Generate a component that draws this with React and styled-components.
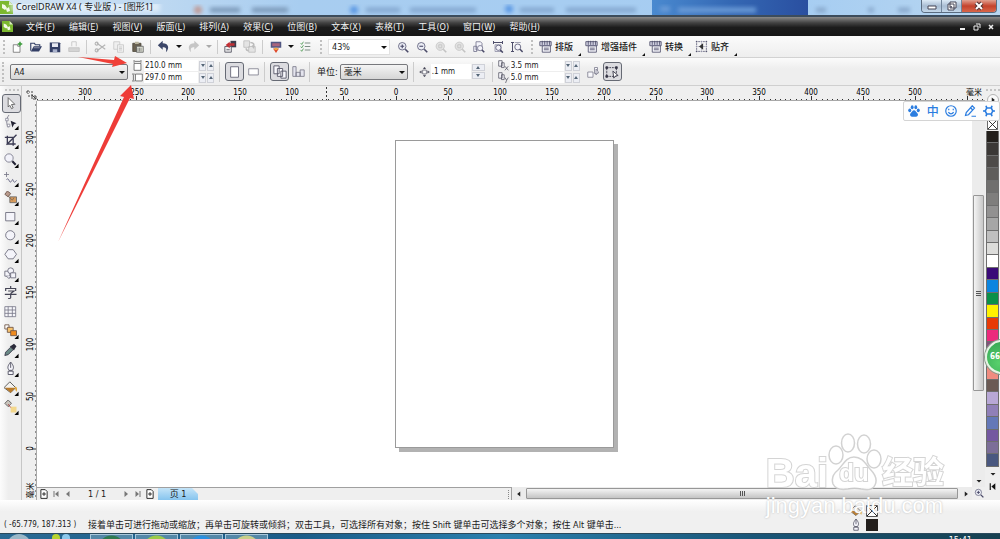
import React from "react";
import styled, { createGlobalStyle } from "styled-components";

const GlobalStyle = createGlobalStyle`
  * {
    box-sizing: border-box;
  }
  body {
    margin: 0;
    background: #efefef;
  }
  button, input, select {
    font: inherit;
    color: inherit;
    margin: 0;
    padding: 0;
    border: 0;
    background: none;
    border-radius: 0;
  }
`;

const menus = [
  ["文件", "F"],
  ["编辑", "E"],
  ["视图", "V"],
  ["版面", "L"],
  ["排列", "A"],
  ["效果", "C"],
  ["位图", "B"],
  ["文本", "X"],
  ["表格", "T"],
  ["工具", "O"],
  ["窗口", "W"],
  ["帮助", "H"]
];

const swatches = [
  "#231f1c", "#3b3836", "#4e4b49", "#5f5d5b", "#706f6e", "#7f7e7d", "#929191",
  "#a6a6a6", "#bfbfbf", "#dcdcda", "#ffffff", "#3a0a78", "#0a85e0", "#0a9048",
  "#fff200", "#e83a06", "#ec2a7c", "#82507c", "#b06a8a", "#f08c80", "#6b5a54",
  "#b8a8d6", "#9080b8", "#6478b8", "#7458a0", "#7c6e98", "#4a5880"
];

const ink = "#4a4a68";

/* 16x16 drawings used by the bars */
const icons = {
  newDoc: (
    <>
      <path d="M3 5h6v2h3v8H3z" fill="#fff" stroke="#666" />
      <path d="M12 1v6M9 4h6" stroke="#3a9a3a" strokeWidth="2" />
    </>
  ),
  open: (
    <>
      <path d="M1 13V3h5l1 2h6v2" fill="none" stroke="#333f66" strokeWidth="1.5" />
      <path d="M1 14 5 7h11l-4 7z" fill="#333f66" />
      <path d="M5 9h8" stroke="#aab" />
    </>
  ),
  save: (
    <>
      <path d="M1 2h13l1 1v12H1z" fill="#333f66" />
      <path d="M4 3h8v5H4z" fill="#e6e8f2" />
      <path d="M5 11h6v4H5z" fill="#aab2cc" />
    </>
  ),
  print: (
    <g fill="none" stroke="#bdbdbd">
      <path d="M5 7V1h6v6M4 10h8" />
      <path d="M1 9h14v5H1z" fill="#d4d4d4" />
    </g>
  ),
  cut: (
    <g fill="none" stroke="#b2b2b2" strokeWidth="1.4">
      <path d="m4 3 11 8M4 13l11-8" />
      <circle cx="3.500" cy="3.500" r="2" />
      <circle cx="3.500" cy="12.500" r="2" />
    </g>
  ),
  copy: (
    <g fill="#efefef" stroke="#c4c4c4">
      <path d="M1 1h8v10H1z" />
      <path d="M6 5h8v10H6zM8 8h4M8 10h4M8 12h4" />
    </g>
  ),
  paste: (
    <>
      <path d="M1 3h11v11H1z" fill="#6a6252" stroke="#4a4438" />
      <path d="M4 1h5v3H4z" fill="#bbb6a0" />
      <path d="M6 7h9v8H6z" fill="#dfe2d6" stroke="#555" />
      <path d="M8 9v5M10 9v5M12 9v5" stroke="#777" />
    </>
  ),
  undo: (
    <path d="M7 1v3c7 0 9 6 4 11 1-5 0-6-4-6v3L1 6.500z" fill="#3b4668" />
  ),
  redo: (
    <path d="M9 1v3C2 4 0 10 5 15 4 10 5 9 9 9v3l6-5.500z" fill="#c6c6c6" />
  ),
  importDoc: (
    <>
      <path d="M8 1h7v8H8z" fill="#3d3d4c" />
      <path d="M1 8h8v7H1z" fill="#eee" stroke="#4a4a58" />
      <path d="M13 4v3H7v3L2 6l5-4v2z" fill="#c22f35" />
      <path d="M3 12h4" stroke="#445" />
    </>
  ),
  exportDoc: (
    <g fill="#e4e4e4" stroke="#bcbcbc">
      <path d="M1 1h7v8H1zM7 8h8v7H7z" />
      <path d="M9 3c4 0 5 2 4 6l-2-2M4 10c0 3 1 3 3 3" fill="none" strokeWidth="2" />
    </g>
  ),
  launcher: (
    <>
      <path d="M1 1h14v8H1z" fill="#515782" />
      <path d="M3 3h10v4H3z" fill="#a9647c" />
      <path d="M4 10h8l-4 6z" fill="#df4b2c" />
      <path d="M6 9h4v3H6z" fill="#edaa42" />
    </>
  ),
  checks: (
    <>
      <path d="M7 3h8M7 8h8M7 13h8" stroke="#7f8f85" strokeWidth="1.5" />
      <path d="m1 3 1.500 2L5 1M1 8l1.500 2L5 6M1 13l1.500 2L5 11" fill="none" stroke="#57a05c" strokeWidth="1.3" />
    </>
  ),
  zoomIn: (
    <g fill="#eceef6" stroke={ink}>
      <circle cx="7" cy="7" r="5" />
      <path d="M4.500 7h5M7 4.500v5" strokeWidth="1.500" />
      <path d="m11 11 4 4" strokeWidth="2.200" />
    </g>
  ),
  zoomOut: (
    <g fill="#eceef6" stroke={ink}>
      <circle cx="7" cy="7" r="5" />
      <path d="M4.500 7h5" strokeWidth="1.500" />
      <path d="m11 11 4 4" strokeWidth="2.200" />
    </g>
  ),
  zoomOff: (
    <g fill="#e2e2e2" stroke="#c2c2c2">
      <circle cx="7" cy="7" r="5.500" />
      <path d="M5 5h4v4H5z" />
      <path d="m11 11 4 4" strokeWidth="2.200" />
    </g>
  ),
  zoomAll: (
    <g fill="#f4f4fa" stroke="#6a6a84">
      <path d="M1 7h4v7H1zM4 1h6l2 2v9H4z" />
      <circle cx="9.500" cy="9.500" r="3.500" />
      <path d="m12 12 3 3" stroke={ink} strokeWidth="2.200" />
    </g>
  ),
  zoomPage: (
    <g fill="#f4f4fa" stroke={ink}>
      <path d="M2 2h12M2 0v4M14 0v4" strokeWidth="1.300" />
      <path d="M4 5h8v9H4z" stroke="#8a8aa0" />
      <circle cx="8.500" cy="9" r="3.500" />
      <path d="m11 12 3.500 3.500" strokeWidth="2" />
    </g>
  ),
  zoomWidth: (
    <g fill="#f4f4fa" stroke={ink}>
      <path d="M2 2v12M0 2h4M0 14h4" strokeWidth="1.300" />
      <path d="M5 2h8" stroke="#8a8aa0" />
      <circle cx="9" cy="8" r="4" />
      <path d="m12 11 3.500 3.500" strokeWidth="2" />
    </g>
  ),
  macro: (
    <g fill="#f5f5fa" stroke={ink}>
      <path d="M4 7h10v8H4z" />
      <path d="M1 2h14v5H1z" fill="#d4d4e4" />
      <path d="M4 1v5M7 1v5M10 1v5M13 1v5M6 10h6M6 12h6" />
    </g>
  ),
  snap: (
    <g fill="none" stroke={ink}>
      <path d="M1 2h14M1 14h14M2 1v14M14 1v14" strokeDasharray="2 1" />
      <path d="M1 8h14M8 1v14" stroke="#9a9ab0" strokeDasharray="2 1" />
      <path d="M10 4v8L5 8z" fill="#333" stroke="none" />
    </g>
  ),
  pageWidth: (
    <g fill="#fff" stroke="#444">
      <path d="M3 5h10v10H3z" />
      <path d="M3 0v4M13 0v4M4 2h8" />
    </g>
  ),
  pageHeight: (
    <g fill="#fff" stroke="#444">
      <path d="M5 3h10v10H5z" />
      <path d="M0 3h4M0 13h4M2 4v8" />
    </g>
  ),
  portrait: <path d="M3 2h9v12H3z" fill="#fff" stroke="#667" />,
  landscape: <path d="M1 4h14v9H1z" fill="#fff" stroke="#667" />,
  pages: (
    <g fill="#f8f8fc" stroke="#556">
      <path d="M1 1h6v9H1zM5 4h6v9H5zM9 7h6v8H9z" />
    </g>
  ),
  pageSet: (
    <g fill="#e4e4ee" stroke="#778">
      <path d="M1 2h4v12H1zM5 9h5v5H5zM10 6h5v8h-5z" />
    </g>
  ),
  nudge: (
    <g fill="#445" stroke="#445">
      <path d="M5 5h6v6H5z" fill="#fff" />
      <path d="m8 0 2 3H6zM8 16l2-3H6zM0 8l3-2v4zM16 8l-3-2v4z" strokeWidth="0.500" />
    </g>
  ),
  dupX: (
    <g fill="#f8f8fc" stroke="#445">
      <path d="M1 1h5v8H1zM5 4h4v7H5z" />
      <path d="m10 9 5 6M15 9l-5 6" />
    </g>
  ),
  dupY: (
    <g fill="#f8f8fc" stroke="#445">
      <path d="M1 1h5v8H1zM5 4h4v7H5z" />
      <path d="m10 8 2.500 4L15 8M12.500 12 11 16" fill="none" />
    </g>
  ),
  treat: (
    <g fill="#f8f8fc" stroke="#778">
      <path d="M1 8h7v7H1zM10 2h4v8h-4z" />
      <path d="m12 4 4 5h-2l-2 3z" />
    </g>
  ),
  marquee: (
    <g fill="none" stroke="#334">
      <path d="M2 3h11v10H2z" strokeDasharray="2 1" />
      <path d="M1 2h2v2H1zM12 2h2v2h-2zM1 12h2v2H1z" fill="#334" />
      <path d="m9 7 6 5-3 .5-2 2.500z" fill="#fff" />
    </g>
  ),
  pick: <path d="m5 2 8 8-4 .2 2 4-2 1-2-4-2 2z" fill="#fff" stroke="#555" />,
  shape: (
    <>
      <path d="M6 0C2 5 3 11 5 15" fill="none" stroke="#778" />
      <path d="M2 4h3v3H2zM4 11h3v3H4z" fill="#fff" stroke="#889" />
      <path d="m8 7 7 3-3 1-2 4z" fill="#223" />
    </>
  ),
  crop: (
    <g fill="none" stroke="#3c3c54" strokeWidth="1.600">
      <path d="M4 2v10h10M1 4h10v10M15 1 3 13" />
    </g>
  ),
  zoom: (
    <g fill="#f2f2fa" stroke="#778">
      <circle cx="6" cy="6" r="5" />
      <path d="m10 10 4 4" stroke="#223" strokeWidth="2.500" />
    </g>
  ),
  freehand: (
    <g fill="none" stroke="#778">
      <path d="M3 0v6M0 3h6" />
      <path d="M3 9c3-3 3 4 5 3s2-5 3-2 2 3 4 0" stroke="#557" />
    </g>
  ),
  smart: (
    <>
      <path d="m4 0 4 3-3 4-4-3z" fill="#b99a8c" stroke="#6b5248" />
      <path d="M7 7h8v7H7z" fill="#d79a5a" stroke="#666" />
      <path d="m5 6 5 5 2-3" fill="none" stroke="#765" />
    </>
  ),
  rect: <path d="M2 3h11v10H2z" fill="#f4f4fa" stroke="#667" />,
  ellipse: <circle cx="7.500" cy="7.500" r="5.500" fill="#f4f4fa" stroke="#667" />,
  polygon: <path d="m5 2-4 5.500L5 13h6l4-5.500L11 2z" fill="#f4f4fa" stroke="#667" />,
  shapes: (
    <g fill="#f4f4fa" stroke="#667">
      <path d="M1 5h6v6H1z" />
      <circle cx="8" cy="4.500" r="3.500" />
      <path d="M8 7h6v6H8zM3 11l3 3 2-3" />
    </g>
  ),
  text: (
    <g fill="none" stroke="#445" strokeWidth="1.400">
      <path d="M8 0v3M2 6V3h12v3M5 6h7L8 9M1 10h14M8 9v5c0 1-1 1-3 1" />
    </g>
  ),
  table: (
    <g fill="#f6f6fa" stroke="#778">
      <path d="M1 2h13v12H1zM1 6h13M1 10h13M5 2v12M10 2v12" />
    </g>
  ),
  blend: (
    <g stroke="#6b5042">
      <path d="M1 1h5v5H1z" fill="#fff" />
      <path d="M4 4h7v6H4z" fill="#f7c36e" />
      <path d="M8 8h7v6H8z" fill="#ee8a1e" />
    </g>
  ),
  dropper: (
    <>
      <path d="m1 15 1-4 6-6 3 3-6 6z" fill="#6a8a86" stroke="#334" />
      <path d="m7 4 5 5 1-2 2-3-3-3-3 2z" fill="#2a2a3a" />
    </>
  ),
  pen: (
    <g fill="#f6f6fc" stroke="#445">
      <path d="M8 0c4 5 4 7 2 10H6C4 7 4 5 8 0zM5 11h6v4H5z" />
      <path d="M8 1v6" />
    </g>
  ),
  bucket: (
    <>
      <path d="m7 1 7 7-6 6-8-6z" fill="#f4f2ee" stroke="#444" />
      <path d="M1 8h13l-6 6z" fill="#b87a2a" />
      <path d="M13 7c3 0 3 3 2 6-2-2-1-4-2-6z" fill="#e0a028" />
    </>
  ),
  mesh: (
    <>
      <path d="m5 0 4 4-4 4-4-4z" fill="#c9c4bc" stroke="#555" />
      <path d="M8 8h7v7H8z" fill="#f3d78c" />
      <path d="m5 5 3 4" stroke="#a33" />
    </>
  ),
  addPage: (
    <g fill="#fff" stroke="#222">
      <path d="M3 1h7l3 3v11H3zM5 8h6M8 5v6" strokeWidth="1.500" />
    </g>
  ),
  first: <path d="M3 2h2v12H3zM13 2v12L6 8z" fill="#777" />,
  prev: <path d="M11 2v12L4 8z" fill="#777" />,
  next: <path d="M5 2v12l7-6z" fill="#777" />,
  last: <path d="M11 2h2v12h-2zM3 2v12l7-6z" fill="#777" />,
  rewind: <path d="M3 2h2v12H3zM13 2v12L6 8z" fill="#111" />,
  left: <path d="M10 4v8L5 8z" fill="#222" />,
  right: <path d="M6 4v8l5-4z" fill="#222" />,
  down: <path d="M3 6h10l-5 5z" fill="#222" />,
  paw: (
    <g fill="#2b7de0">
      <ellipse cx="2.300" cy="7" rx="2" ry="2.500" />
      <ellipse cx="5.600" cy="3" rx="1.900" ry="2.600" />
      <ellipse cx="10.400" cy="3" rx="1.900" ry="2.600" />
      <ellipse cx="13.700" cy="7" rx="2" ry="2.500" />
      <path d="M8 7c2 0 3 3 5 4.500 1 2-.5 4-2.500 4H5.500c-2 0-3.500-2-2.500-4C5 10 6 7 8 7z" />
    </g>
  ),
  smile: (
    <g fill="none" stroke="#2b7de0" strokeWidth="1.600">
      <circle cx="8" cy="8" r="7" />
      <path d="M5 5v2M11 5v2M4.500 9.500c2 3 5 3 7 0" />
    </g>
  ),
  pencil: (
    <g fill="none" stroke="#2b7de0" strokeWidth="1.600">
      <path d="m2 14 1-4 8-9 3 3-8 9zM9 4l3 3M10 15h6" />
    </g>
  ),
  gear: (
    <g fill="none" stroke="#2b7de0" strokeWidth="2.200">
      <path d="m5 4-2 4 2 4h6l2-4-2-4z" />
      <path d="M5 4 4 1M11 4l1-3M3 8H0M13 8h3M5 12l-1 3M11 12l1 3" />
    </g>
  )
};

const Icon = ({ name, size = 13 }) => (
  <svg width={size} height={size} viewBox="0 0 16 16" aria-hidden="true">
    {icons[name]}
  </svg>
);

const App = () => (
  <Window>
    <GlobalStyle />
    <TitleBar>
      <AeroGlass />
      <LogoMark size={13} />
      <Title>CorelDRAW X4 ( 专业版 ) - [图形1]</Title>
      <WindowButtons>
        <WindowButton aria-label="最小化">
          <svg width="10" height="10">
            <path d="M1 5h8v3H1z" fill="#fff" stroke="#445" />
          </svg>
        </WindowButton>
        <WindowButton aria-label="还原">
          <svg width="10" height="10">
            <path d="M3 1h6v6H3zM1 3h6v6H1z" fill="#fff" stroke="#445" />
            <path d="M3 5h2v2H3z" fill="#667" />
          </svg>
        </WindowButton>
        <WindowButton close aria-label="关闭">
          <svg width="10" height="10">
            <path d="m2 2 6 6M8 2 2 8" stroke="#533" strokeWidth="4" />
            <path d="m2 2 6 6M8 2 2 8" stroke="#fff" strokeWidth="2" />
          </svg>
        </WindowButton>
      </WindowButtons>
    </TitleBar>

    <MenuBar>
      <LogoMark size={11} />
      <MenuList>
        {menus.map(([label, letter]) => (
          <MenuButton key={letter}>
            {label}(<u>{letter}</u>)
          </MenuButton>
        ))}
      </MenuList>
      <svg width="36" height="8" stroke="#eee" fill="none" aria-hidden="true">
        <path d="M0 6h5" strokeWidth="2" />
        <path d="M16 1h4v4M14 3h4v4h-4z" />
        <path d="m29 2 4 4M33 2l-4 4" strokeWidth="1.500" />
      </svg>
    </MenuBar>

    <Toolbar>
      <Grip />
      {["newDoc", "open", "save", "print"].map(name => (
        <ToolButton key={name} aria-label={name}>
          <Icon name={name} size={12} />
        </ToolButton>
      ))}
      <Separator />
      {["cut", "copy", "paste"].map(name => (
        <ToolButton key={name} aria-label={name}>
          <Icon name={name} size={12} />
        </ToolButton>
      ))}
      <Separator />
      <ToolButton aria-label="undo">
        <Icon name="undo" />
      </ToolButton>
      <CaretButton aria-label="undo list" />
      <ToolButton aria-label="redo">
        <Icon name="redo" />
      </ToolButton>
      <CaretButton aria-label="redo list" muted />
      <Separator />
      <ToolButton aria-label="import">
        <Icon name="importDoc" />
      </ToolButton>
      <ToolButton aria-label="export">
        <Icon name="exportDoc" />
      </ToolButton>
      <Separator />
      <ToolButton aria-label="launcher">
        <Icon name="launcher" size={12} />
      </ToolButton>
      <CaretButton aria-label="launcher list" />
      <ToolButton aria-label="options">
        <Icon name="checks" size={11} />
      </ToolButton>
      <ToolGroup>
        <Grip />
        <SelectBox width={62} flat>
          <select aria-label="缩放" defaultValue="43%">
            <option>43%</option>
          </select>
        </SelectBox>
        {[
          "zoomIn",
          "zoomOut",
          "zoomOff",
          "zoomOff",
          "zoomAll",
          "zoomPage",
          "zoomWidth"
        ].map((name, index) => (
          <ToolButton key={index} aria-label={name}>
            <Icon name={name} size={12} />
          </ToolButton>
        ))}
      </ToolGroup>
      <ToolGroup>
        <Grip />
        <MacroList>
          <MacroButton>
            <Icon name="macro" />
            排版
          </MacroButton>
          <MacroButton>
            <Icon name="macro" />
            增强插件
          </MacroButton>
          <MacroButton>
            <Icon name="macro" />
            转换
          </MacroButton>
          <MacroButton>
            <Icon name="snap" />
            贴齐
          </MacroButton>
        </MacroList>
      </ToolGroup>
    </Toolbar>

    <PropertyBar>
      <Grip tall />
      <SelectBox width={118}>
        <select aria-label="纸张" defaultValue="A4">
          <option>A4</option>
        </select>
      </SelectBox>
      <FieldPair>
        <Field>
          <Icon name="pageWidth" size={11} />
          <input aria-label="宽度" defaultValue="210.0 mm" />
          <Spinner />
        </Field>
        <Field>
          <Icon name="pageHeight" size={11} />
          <input aria-label="高度" defaultValue="297.0 mm" />
          <Spinner />
        </Field>
      </FieldPair>
      <Separator tall />
      <ToolButton active aria-label="纵向">
        <Icon name="portrait" size={14} />
      </ToolButton>
      <ToolButton aria-label="横向">
        <Icon name="landscape" size={11} />
      </ToolButton>
      <Separator tall />
      <ToolButton active aria-label="所有页面">
        <Icon name="pages" size={14} />
      </ToolButton>
      <ToolButton aria-label="当前页">
        <Icon name="pageSet" size={13} />
      </ToolButton>
      <Separator tall />
      <UnitLabel htmlFor="unit">单位:</UnitLabel>
      <SelectBox width={68}>
        <select id="unit" defaultValue="毫米">
          <option>毫米</option>
        </select>
      </SelectBox>
      <Separator tall />
      <NudgeField>
        <Icon name="nudge" size={10} />
        <input aria-label="微调偏移" defaultValue=".1 mm" />
        <Spinner stacked />
      </NudgeField>
      <Separator tall />
      <FieldPair>
        <Field>
          <Icon name="dupX" size={11} />
          <input aria-label="再制距离 X" defaultValue="3.5 mm" />
          <Spinner />
        </Field>
        <Field>
          <Icon name="dupY" size={11} />
          <input aria-label="再制距离 Y" defaultValue="5.0 mm" />
          <Spinner />
        </Field>
      </FieldPair>
      <ToolButton aria-label="视为已填充">
        <Icon name="treat" size={12} />
      </ToolButton>
      <ToolButton active aria-label="选取框">
        <Icon name="marquee" size={14} />
      </ToolButton>
    </PropertyBar>

    <Workspace>
      <Toolbox />
      <DrawingArea>
        <RulerCorner>
          <svg width="11" height="11" stroke="#444" fill="none">
            <path d="M2 1v4M0 3h4M6 2v9M2 7h9" strokeDasharray="2 1" />
            <path d="m6 6 4 4M10 7v3H7" />
          </svg>
        </RulerCorner>
        <HorizontalRuler />
        <VerticalRuler />
        <Canvas>
          <Page />
        </Canvas>
        <VScroll>
          <VThumb>
            <i />
            <i />
            <i />
          </VThumb>
          <ScrollEnd aria-label="向下滚动">
            <Icon name="down" size={8} />
          </ScrollEnd>
        </VScroll>
        <BottomRow>
          <Navigator>
            <NavButton aria-label="添加页面">
              <Icon name="addPage" size={10} />
            </NavButton>
            <NavButton aria-label="第一页">
              <Icon name="first" size={8} />
            </NavButton>
            <NavButton aria-label="上一页">
              <Icon name="prev" size={8} />
            </NavButton>
            <PageCount>1 / 1</PageCount>
            <NavButton aria-label="下一页">
              <Icon name="next" size={8} />
            </NavButton>
            <NavButton aria-label="最后一页">
              <Icon name="last" size={8} />
            </NavButton>
            <NavButton aria-label="在后面添加页面">
              <Icon name="addPage" size={10} />
            </NavButton>
            <PageTab>页 1</PageTab>
            <NavGrip />
          </Navigator>
          <HScroll>
            <ScrollEnd aria-label="向左滚动">
              <Icon name="left" size={10} />
            </ScrollEnd>
            <HThumb>
              <i />
              <i />
              <i />
            </HThumb>
            <ScrollEnd aria-label="向右滚动">
              <Icon name="right" size={10} />
            </ScrollEnd>
          </HScroll>
        </BottomRow>
        <ScrollEnd aria-label="导航器">
          <Icon name="zoomIn" size={10} />
        </ScrollEnd>
      </DrawingArea>
      <Palette>
        <DotRow />
        <PaletteMenu aria-label="调色板菜单">
          <Icon name="right" size={10} />
        </PaletteMenu>
        <NoColor aria-label="无颜色">
          <CrossBox size={11} />
        </NoColor>
        {swatches.map((color, index) => (
          <Swatch key={index} color={color} aria-label={color} />
        ))}
        <PaletteFoot>
          <Icon name="down" size={8} />
          <Icon name="rewind" size={9} />
        </PaletteFoot>
      </Palette>
      <ImeBar>
        <Icon name="paw" size={12} />
        <b>中</b>
        <Icon name="smile" size={12} />
        <Icon name="pencil" size={12} />
        <Icon name="gear" size={12} />
      </ImeBar>
      <SpeedBall>66</SpeedBall>
    </Workspace>

    <StatusBar>
      <Coordinates>( -65.779, 187.313 )</Coordinates>
      <Hint>
        接着单击可进行拖动或缩放；再单击可旋转或倾斜；双击工具，可选择所有对象；按住
        Shift 键单击可选择多个对象；按住 Alt 键单击...
      </Hint>
      <ColorState>
        <Icon name="bucket" size={12} />
        <CrossBox size={12} />
        <Icon name="pen" size={12} />
        <OutlineColor />
      </ColorState>
      <Watermark />
    </StatusBar>

    <Taskbar>
      <svg width="88" height="6">
        <circle cx="19" cy="12" r="12" fill="#9ab8c8" />
        <circle cx="56" cy="4" r="4" fill="#b8d430" />
        <circle cx="66" cy="4" r="4" fill="#8cc8ec" />
      </svg>
      {["#2f7a50", "#9ccb4a", "#2a90e0", "#c9cf8a"].map(color => (
        <TaskButton key={color} color={color} />
      ))}
      <Clock>15:41</Clock>
    </Taskbar>

    <Arrows width="140" height="250" aria-hidden="true">
      <path d="m78 57 36 3 1-4 12 7-15 4 1-3z" fill="#f04038" />
      <path d="m58 242 66-145-4-1 11-11 3 14-4-1z" fill="#ee3c38" />
    </Arrows>
  </Window>
);

const tools = [
  "pick", "shape", "crop", "zoom", "freehand", "smart", "rect", "ellipse",
  "polygon", "shapes", "text", "table", "blend", "dropper", "pen", "bucket",
  "mesh"
];
const plainTools = ["pick", "text", "table"];

const Toolbox = () => (
  <ToolColumn>
    <DotRow />
    {tools.map(name => (
      <ToolButton key={name} active={name === "pick"} aria-label={name}>
        <svg width="15" height="15" viewBox="0 0 18 18">
          {icons[name]}
          {!plainTools.includes(name) && <path d="M17.500 13v5h-5z" />}
        </svg>
      </ToolButton>
    ))}
  </ToolColumn>
);

/* one ruler step is 5 mm on the page */
const STEP = 5.19;
const steps = Array.from({ length: 401 }, (_, i) => i - 200);
const hasLabel = (n, last) => n % 10 === 0 && n >= -60 && n <= last;

const HorizontalRuler = () => (
  <RulerTop>
    <svg x="50%" overflow="visible">
      <g transform="translate(-115 0)">
        {steps.map(n => (
          <React.Fragment key={n}>
            <path d={`M${Math.round(n * STEP)}.5 15v-${n % 10 === 0 ? 5 : 2}`} />
            {hasLabel(n, 100) && (
              <text x={Math.round(n * STEP)} y="9" textAnchor="middle">
                {Math.abs(n * 5)}
              </text>
            )}
          </React.Fragment>
        ))}
        <path d="M-69.5 1v13" strokeDasharray="2 2" />
      </g>
    </svg>
    <text x="100%" y="9" dx="-3" textAnchor="end">
      毫米
    </text>
  </RulerTop>
);

const VerticalRuler = () => (
  <RulerLeft>
    <svg y="50%" overflow="visible">
      <g transform="translate(0 148)">
        {steps.map(n => (
          <React.Fragment key={n}>
            <path d={`M15 ${Math.round(n * STEP)}.5h-${n % 10 === 0 ? 5 : 2}`} />
            {hasLabel(n, 0) && (
              <text
                transform={`translate(11 ${Math.round(n * STEP)}) rotate(-90)`}
                textAnchor="middle"
              >
                {Math.abs(n * 5)}
              </text>
            )}
          </React.Fragment>
        ))}
        <text transform="translate(11 42) rotate(-90)" textAnchor="middle">
          毫米
        </text>
      </g>
    </svg>
  </RulerLeft>
);

const Spinner = ({ stacked }) => (
  <SpinnerBox stacked={stacked}>
    <button aria-label={stacked ? "增加" : "减少"}>
      <svg width="4" height="3">
        <path d={stacked ? "M0 3h4L2 0z" : "M0 0h4L2 3z"} fill="#567" />
      </svg>
    </button>
    <button aria-label={stacked ? "减少" : "增加"}>
      <svg width="4" height="3">
        <path d={stacked ? "M0 0h4L2 3z" : "M0 3h4L2 0z"} fill="#567" />
      </svg>
    </button>
  </SpinnerBox>
);

const LogoMark = ({ size }) => (
  <svg width={size} height={size} viewBox="0 0 13 13" aria-hidden="true">
    <path d="M0 0h9l4 4v9H0z" fill="#7cb82f" />
    <path d="M9 0v4h4z" fill="#dcebc4" />
    <path d="m2 3 3 1 2 3-2 2-3-2zM6 8l3-2 1 4-3 1z" fill="#f4fae8" />
  </svg>
);

const CrossBox = ({ size }) => (
  <svg width={size} height={size} viewBox="0 0 12 12">
    <path d="M.5.5h11v11H.5z" fill="#fff" stroke="#555" />
    <path d="m1 1 10 10M11 1 1 11" stroke="#222" />
  </svg>
);

/* what shines through the glass frame of the window */
const AeroGlass = () => (
  <Glass aria-hidden="true">
    <defs>
      <filter id="soft">
        <feGaussianBlur stdDeviation="2" />
      </filter>
      <linearGradient id="tab">
        <stop offset="0" stopColor="#4a8ad0" />
        <stop offset="0.500" stopColor="#3468b4" />
        <stop offset="1" stopColor="#2a4fa0" />
      </linearGradient>
    </defs>
    <rect x="652" y="-4" width="156" height="24" fill="url(#tab)" />
    <g filter="url(#soft)">
      <circle cx="198" cy="10" r="4" fill="#c09a94" />
      <path d="M210 10h30M252 10h36" stroke="#7a98b8" strokeWidth="5" />
      <circle cx="354" cy="10" r="4" fill="#5b98e4" />
      <path d="M366 10h34M410 10h66" stroke="#84a8d0" strokeWidth="5" />
      <circle cx="509" cy="9" r="4" fill="#5b98e4" />
      <path d="M520 10h34M566 10h70" stroke="#84a8d0" strokeWidth="5" />
      <path d="M660 9h10M678 10h78" stroke="#6c9cd8" strokeWidth="5" />
      <path d="M816 10h10M868 10h6M898 10h12" stroke="#88a8cc" strokeWidth="5" />
      <path d="M10 7h150" stroke="#f2f8fd" strokeWidth="10" opacity="0.600" />
    </g>
  </Glass>
);

const Watermark = () => (
  <WatermarkBox aria-hidden="true">
    <WatermarkRow>
      <span>Bai</span>
      <WatermarkPaw>
        <svg width="54" height="58" viewBox="0 0 54 58">
          <g fill="#fff" stroke="#cecece" strokeWidth="1.500">
            <ellipse cx="8" cy="22" rx="7" ry="9" />
            <ellipse cx="20" cy="10" rx="6.500" ry="9" />
            <ellipse cx="36" cy="11" rx="6.500" ry="9" />
            <ellipse cx="46" cy="26" rx="7" ry="9" />
            <path d="M26 24c8 0 11 6 16 12 5 5 8 10 5 16-3 6-9 5-14 4-4-1-9-1-13 0-6 1-12 1-15-5-2-6 0-10 5-14C15 32 18 24 26 24z" />
          </g>
        </svg>
        <em>du</em>
      </WatermarkPaw>
      <span>经验</span>
    </WatermarkRow>
    <WatermarkUrl>jingyan.baidu.com</WatermarkUrl>
  </WatermarkBox>
);

const Window = styled.div`
  position: relative;
  display: flex;
  flex-direction: column;
  min-height: 100vh;
  overflow: hidden;
  background: #efefef;
  color: #1a1a1a;
  font-family: "DejaVu Sans Condensed", "Noto Sans", "Noto Sans CJK SC",
    sans-serif;
  font-size: 9px;
  line-height: 12px;
`;
const TitleBar = styled.header`
  position: relative;
  display: flex;
  align-items: center;
  gap: 3px;
  height: 17px;
  padding-bottom: 1px;
  border-bottom: 2px solid #3c4c5c;
  background: linear-gradient(90deg, #d5e5f3, #a8cdf0 30%, #a6cdf2 80%, #b8d6f0);
`;
const Glass = styled.svg`
  position: absolute;
  inset: 0;
  width: 100%;
  height: 100%;
`;
const Title = styled.h1`
  position: relative;
  flex: 1;
  margin: 0;
  font-family: "Noto Sans", "Noto Sans CJK SC", sans-serif;
  font-size: 9px;
  font-weight: 400;
  line-height: 14px;
`;
const WindowButtons = styled.div`
  position: relative;
  display: flex;
  align-self: flex-start;
  height: 13px;
  margin-right: 3px;
  border: 1px solid #5a6c80;
  border-top: 0;
  border-radius: 0 0 4px 4px;
  overflow: hidden;
`;
const WindowButton = styled.button`
  display: flex;
  align-items: center;
  justify-content: center;
  width: ${props => (props.close ? "34px" : "20px")};
  border-right: ${props => (props.close ? "0" : "1px solid #70849a")};
  background: ${props =>
    props.close
      ? "linear-gradient(#e0a090, #c4422c 50%, #d8664a)"
      : "linear-gradient(#dceaf6, #a8bcd2 50%, #c4d8ea)"};
`;
const MenuBar = styled.nav`
  display: flex;
  align-items: center;
  height: 19px;
  padding: 0 4px 0 2px;
  background: linear-gradient(#8a8a8a, #444 30%, #1c1c1c 55%, #161616);
  color: #f2f2f2;
`;
const MenuList = styled.div`
  display: flex;
  flex: 1;
  gap: 14px;
  padding-left: 13px;
`;
const MenuButton = styled.button`
  white-space: nowrap;
  u {
    text-underline-offset: 1px;
  }
`;
const Toolbar = styled.div`
  display: flex;
  align-items: center;
  height: 22px;
  padding-left: 3px;
  border-bottom: 1px solid #d2d2d2;
  background: linear-gradient(#fbfbfb, #eeeeee);
`;
const ToolGroup = styled.div`
  display: flex;
  align-items: center;
  padding-left: 5px;
`;
const Grip = styled.span`
  width: 4px;
  height: ${props => (props.tall ? "20px" : "14px")};
  margin-right: ${props => (props.tall ? "4px" : "0")};
  border-left: 2px dotted #c0c0c0;
  flex: none;
`;
const Separator = styled.span`
  flex: none;
  width: 1px;
  height: ${props => (props.tall ? "20px" : "14px")};
  margin: ${props => (props.tall ? "0 5px 0 1px" : "0 3px")};
  background: #cccccc;
`;
const ToolButton = styled.button`
  display: flex;
  align-items: center;
  justify-content: center;
  flex: none;
  width: 19px;
  height: 19px;
  border: 1px solid ${props => (props.active ? "#666a74" : "transparent")};
  border-radius: 3px;
  background: ${props => (props.active ? "#dcdce0" : "none")};
`;
const CaretButton = styled.button`
  flex: none;
  width: 11px;
  height: 19px;
  &::after {
    content: "";
    display: block;
    margin: 0 auto;
    width: 0;
    border: 3px solid transparent;
    border-top-color: ${props => (props.muted ? "#aaa" : "#111")};
    border-bottom: 0;
  }
`;
const SelectBox = styled.div`
  position: relative;
  flex: none;
  width: ${props => props.width}px;
  margin: ${props => (props.flat ? "0 3px 0 4px" : "0 4px 0 0")};
  select {
    appearance: none;
    display: block;
    width: 100%;
    height: 16px;
    padding: 0 12px 0 3px;
    border: 1px solid ${props => (props.flat ? "#e2e2e2" : "#77787c")};
    border-radius: ${props => (props.flat ? "0" : "2px")};
    background: ${props =>
      props.flat ? "#fff" : "linear-gradient(#f4f4f4, #d6d6d6)"};
    font-size: 9px;
    line-height: 14px;
  }
  &::after {
    content: "";
    position: absolute;
    right: 3px;
    top: 7px;
    border: 3px solid transparent;
    border-top-color: #111;
    border-bottom: 0;
    pointer-events: none;
  }
`;
const MacroList = styled.div`
  display: flex;
  padding-left: 4px;
`;
const MacroButton = styled.button`
  position: relative;
  display: flex;
  align-items: center;
  gap: 3px;
  height: 20px;
  padding-right: 12px;
  font-weight: 500;
  white-space: nowrap;
  &::after {
    content: "";
    position: absolute;
    right: 4px;
    bottom: 1px;
    border-left: 3px solid transparent;
    border-bottom: 3px solid #111;
  }
`;
const PropertyBar = styled.div`
  display: flex;
  align-items: center;
  height: 28px;
  padding-left: 2px;
  border-bottom: 1px solid #cfcfcf;
  background: linear-gradient(#fbfbfb, #eeeeee 40%);
`;
const FieldPair = styled.div`
  display: flex;
  flex-direction: column;
  padding-right: 4px;
`;
const Field = styled.div`
  display: flex;
  align-items: center;
  gap: 1px;
  height: 12px;
  font-size: 8px;
  > svg {
    flex: none;
    width: 11px;
  }
  input {
    width: 54px;
    height: 11px;
    padding-left: 1px;
    background: #fff;
  }
`;
const NudgeField = styled(Field)`
  height: 16px;
  padding-right: 6px;
  input {
    width: 40px;
    height: 15px;
  }
`;
const SpinnerBox = styled.span`
  display: flex;
  flex-direction: ${props => (props.stacked ? "column" : "row")};
  gap: 1px;
  button {
    display: flex;
    align-items: center;
    justify-content: center;
    width: ${props => (props.stacked ? "13px" : "7px")};
    height: ${props => (props.stacked ? "7px" : "10px")};
    border: 1px solid #cfd1d8;
    background: #eceef4;
  }
`;
const UnitLabel = styled.label`
  padding: 0 2px;
  white-space: nowrap;
`;
const Workspace = styled.main`
  position: relative;
  display: flex;
  flex: 1;
`;
const ToolColumn = styled.aside`
  flex: none;
  display: flex;
  flex-direction: column;
  align-items: center;
  width: 22px;
  padding-left: 2px;
  border-right: 1px solid #c6c6c6;
  background: linear-gradient(90deg, #fcfcfc, #eeeeee 40%);
`;
const DotRow = styled.span`
  width: 14px;
  height: 4px;
  margin: 3px 0 1px;
  border-top: 2px dotted #c4c4c4;
`;
const DrawingArea = styled.div`
  flex: 1;
  min-width: 0;
  display: grid;
  grid-template-columns: 15px 1fr 13px;
  grid-template-rows: 15px 1fr 13px;
`;
const RulerCorner = styled.div`
  padding: 3px 0 0 4px;
`;
const RulerTop = styled.svg`
  grid-column: 2 / 4;
  width: 100%;
  height: 15px;
  border-bottom: 1px solid #a8a8a8;
  font-size: 8px;
  path {
    stroke: #333;
  }
`;
const RulerLeft = styled.svg`
  grid-row: 2 / 4;
  width: 15px;
  height: 100%;
  border-right: 1px solid #a8a8a8;
  font-size: 8px;
  path {
    stroke: #333;
  }
`;
const Canvas = styled.div`
  display: flex;
  align-items: center;
  justify-content: center;
  background: #fff;
`;
const Page = styled.div`
  width: 219px;
  height: 308px;
  border: 1px solid #9a9a9a;
  background: #fff;
  box-shadow: 4px 4px 0 #b2b2b2;
`;
const VScroll = styled.div`
  display: flex;
  flex-direction: column;
  align-items: center;
  padding-top: 94px;
  background: #ececec;
`;
const VThumb = styled.div`
  flex: 5;
  display: flex;
  flex-direction: column;
  align-items: center;
  justify-content: center;
  gap: 1px;
  width: 11px;
  margin-bottom: 84px;
  border: 1px solid #979797;
  border-radius: 1px;
  background: linear-gradient(90deg, #f4f4f4, #c8c8c8);
  i {
    width: 5px;
    height: 1px;
    background: #555;
  }
`;
const ScrollEnd = styled.button`
  display: flex;
  align-items: center;
  justify-content: center;
  flex: none;
  width: 13px;
  height: 12px;
`;
const BottomRow = styled.div`
  display: flex;
  height: 13px;
`;
const Navigator = styled.div`
  flex: 103;
  display: flex;
  align-items: center;
  padding-left: 1px;
  border-top: 1px solid #a0a0a0;
  border-right: 1px solid #a0a0a0;
`;
const NavButton = styled.button`
  display: flex;
  align-items: center;
  justify-content: center;
  width: 12px;
  height: 12px;
`;
const PageCount = styled.span`
  width: 46px;
  text-align: center;
`;
const PageTab = styled.button`
  width: 40px;
  height: 12px;
  margin-left: 2px;
  background: linear-gradient(#c4e4f8, #86c4ee);
  clip-path: polygon(0 0, 34px 0, 100% 6px, 100% 100%, 0 100%);
`;
const NavGrip = styled.span`
  height: 9px;
  margin: 0 2px 0 auto;
  border-left: 1px dotted #888;
`;
const HScroll = styled.div`
  flex: 100;
  display: flex;
  align-items: center;
  background: #ececec;
`;
const HThumb = styled.div`
  flex: 1;
  display: flex;
  align-items: center;
  justify-content: center;
  gap: 1px;
  height: 11px;
  margin: 0 1px;
  border: 1px solid #979797;
  border-radius: 1px;
  background: linear-gradient(#f4f4f4, #c4c4c4);
  i {
    width: 1px;
    height: 5px;
    background: #555;
  }
`;
const Palette = styled.aside`
  flex: none;
  display: flex;
  flex-direction: column;
  align-items: center;
  width: 15px;
`;
const PaletteMenu = styled.button`
  display: flex;
  align-items: center;
  justify-content: center;
  width: 12px;
  height: 12px;
  border: 1px solid #b4b4b4;
  border-radius: 6px;
  background: #fafafa;
`;
const NoColor = styled.button`
  height: 11px;
  margin: 13px 0 1px;
  line-height: 0;
`;
const Swatch = styled.button`
  flex: 1;
  width: 13px;
  border: 1px solid #6e6e6e;
  border-width: 0 1px 1px;
  background: ${props => props.color};
`;
const PaletteFoot = styled.div`
  display: flex;
  flex-direction: column;
  align-items: center;
  gap: 4px;
  height: 33px;
  padding-top: 3px;
`;
const ImeBar = styled.div`
  position: absolute;
  top: 15px;
  right: 0;
  display: flex;
  align-items: center;
  justify-content: space-between;
  width: 97px;
  height: 20px;
  padding: 0 4px;
  border: 1px solid #d4d4d4;
  border-radius: 2px;
  background: #fdfdfd;
  color: #2b7de0;
  b {
    font-family: "Noto Sans CJK SC", sans-serif;
    font-size: 12px;
    font-weight: 500;
    line-height: 18px;
  }
`;
const SpeedBall = styled.button`
  position: absolute;
  right: -19px;
  top: 254px;
  width: 34px;
  height: 34px;
  padding-right: 14px;
  border: 2px solid #e4f4e4;
  border-radius: 17px;
  background: radial-gradient(circle at 40% 70%, #58d06c, #2f9e50);
  box-shadow: 0 0 0 1px #8a9a8a;
  color: #fff;
  font-size: 8px;
  font-weight: 700;
`;
const StatusBar = styled.footer`
  position: relative;
  display: flex;
  align-items: flex-end;
  height: 33px;
  padding: 0 122px 2px 4px;
  background: linear-gradient(#ffffff, #f0f0f0 35%);
`;
const Coordinates = styled.span`
  flex: none;
  width: 84px;
  font-size: 8px;
`;
const Hint = styled.span`
  flex: 1;
  white-space: nowrap;
`;
const ColorState = styled.div`
  display: grid;
  grid-template-columns: 12px 12px;
  gap: 2px 4px;
  line-height: 0;
`;
const OutlineColor = styled.span`
  background: #231f1c;
`;
const WatermarkBox = styled.div`
  position: absolute;
  right: 56px;
  bottom: 14px;
  font-family: "Liberation Sans", "Noto Sans CJK SC", sans-serif;
  pointer-events: none;
`;
const WatermarkRow = styled.div`
  display: flex;
  align-items: flex-end;
  height: 58px;
  margin-bottom: 2px;
  color: #fff;
  font-size: 40px;
  font-weight: 700;
  line-height: 36px;
  opacity: 0.9;
  span,
  em {
    -webkit-text-stroke: 2px #d0d0d0;
    paint-order: stroke fill;
  }
  span:last-child {
    font-size: 31px;
  }
`;
const WatermarkPaw = styled.div`
  position: relative;
  height: 58px;
  em {
    position: absolute;
    left: 0;
    bottom: 0;
    width: 52px;
    text-align: center;
    font-size: 24px;
    font-style: normal;
    line-height: 36px;
  }
`;
const WatermarkUrl = styled.div`
  color: #fff;
  font-size: 22px;
  line-height: 26px;
  text-shadow: 0 0 2px #b4b4b4;
`;
const Taskbar = styled.div`
  display: flex;
  gap: 2px;
  height: 6px;
  overflow: hidden;
  border-top: 1px solid #2a4a5c;
  background: linear-gradient(90deg, #2a6a94, #1a5c88 30%, #2a80ae 50%, #1a5678 75%, #164050);
`;
const TaskButton = styled.button`
  width: 43px;
  height: 30px;
  border: 1px solid #a8c8dc;
  background: radial-gradient(circle at 50% 50%, ${props => props.color} 13px, #5488a8 14px);
`;
const Clock = styled.span`
  margin: 0 28px 0 auto;
  color: #fff;
`;
const Arrows = styled.svg`
  position: absolute;
  left: 0;
  top: 0;
  pointer-events: none;
`;

export default App;
